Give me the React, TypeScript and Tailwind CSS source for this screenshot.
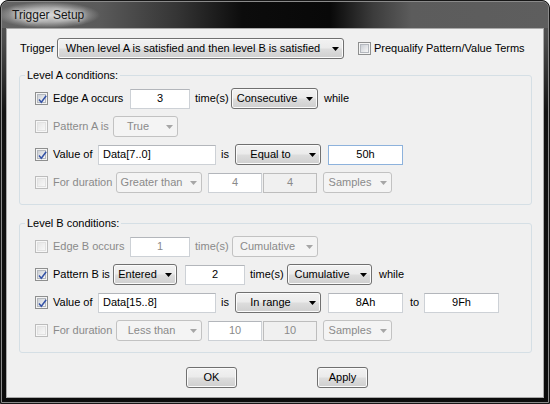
import React from 'react';

// Win7 style "Trigger Setup" dialog

const raised =
  'border-[#707070] bg-[linear-gradient(#f2f2f2_0%,#ebebeb_48%,#dddddd_52%,#cfcfcf_100%)] shadow-[inset_0_0_0_1px_#fbfbfb] text-black';
const flatOff = 'border-[#c2c2c2] bg-[#f4f4f4] text-[#8a8a8a]';

const Arrow = ({ disabled }: { disabled?: boolean }) => (
  <svg width="7" height="4" viewBox="0 0 7 4">
    <path d="M0 0h7L3.5 4z" fill={disabled ? '#a6a6a6' : '#000'} />
  </svg>
);

function Check({ checked, disabled }: { checked?: boolean; disabled?: boolean }) {
  return (
    <div
      className={`relative flex h-[13px] w-[13px] shrink-0 items-center justify-center border ${
        disabled ? 'border-[#bcbcbc] bg-[#f7f7f7]' : 'border-[#8e8f8f] bg-[#f4f4f4]'
      }`}
    >
      <div
        className={`h-[9px] w-[9px] border ${
          disabled
            ? 'border-[#e2e2e2] bg-[linear-gradient(135deg,#e6e6e6,#f7f7f7)]'
            : 'border-[#b4b8be] bg-[linear-gradient(135deg,#cbcfd5,#f7f7f7)]'
        }`}
      />
      {checked && (
        <svg className="absolute left-[1px] top-[1px]" width="11" height="11" viewBox="0 0 11 11">
          <path d="M2 5.6 L4.3 8.2 L9.2 1.7" stroke="#3452a6" strokeWidth="1.5" fill="none" />
        </svg>
      )}
    </div>
  );
}

function Combo({ text, className = '', disabled }: { text: string; className?: string; disabled?: boolean }) {
  return (
    <div className={`flex h-[21px] shrink-0 items-center rounded-[3px] border ${disabled ? flatOff : raised} ${className}`}>
      <span className="flex-1 overflow-hidden whitespace-nowrap text-center leading-none">{text}</span>
      <span className="flex w-[15px] justify-center">
        <Arrow disabled={disabled} />
      </span>
    </div>
  );
}

function Field({
  text,
  className = '',
  disabled,
  left,
  hot,
  flat,
}: {
  text: string;
  className?: string;
  disabled?: boolean;
  left?: boolean;
  hot?: boolean;
  flat?: boolean;
}) {
  return (
    <div
      className={`flex h-[20px] shrink-0 items-center border leading-none ${
        hot ? 'border-[#8db2dc]' : flat ? 'border-[#bdbdbd]' : 'border-[#cdd1d6] border-t-[#b3b6bb]'
      } ${flat ? 'bg-[#f0f0f0]' : 'bg-white'} ${disabled ? 'text-[#8a8a8a]' : 'text-black'} ${
        left ? 'justify-start pl-[4px]' : 'justify-center'
      } ${className}`}
    >
      {text}
    </div>
  );
}

function Group({ title, children, className = '' }: { title: string; children: React.ReactNode; className?: string }) {
  return (
    <div className={`relative ml-[12px] w-[513px] rounded-[3px] border border-[#d5dfe5] pb-[11px] pl-[15px] pt-[12px] ${className}`}>
      <span className="absolute left-[5px] top-[-8px] bg-[#f0f0f0] px-[2px] leading-[14px]">{title}</span>
      <div className="flex flex-col gap-[7px]">{children}</div>
    </div>
  );
}

const Row = ({ children }: { children: React.ReactNode }) => (
  <div className="flex h-[21px] items-center whitespace-nowrap">{children}</div>
);

const off = 'text-[#8a8a8a]';

export default function App() {
  return (
    <div className="h-[404px] w-[550px] bg-white font-['Liberation_Sans',Arial,sans-serif] text-[11px] text-black">
      <div className="h-full w-full rounded-t-[8px] border border-[#161616] bg-[#0e0e0e]">
        <div className="flex h-full w-full flex-col rounded-t-[7px] border border-[#8a8a8a] bg-[linear-gradient(#5b5b5b_0px,#4a4a4a_40px,#121212_110px,#0c0c0c_100%)]">
          {/* title bar */}
          <div className="flex h-[26px] shrink-0 items-center overflow-hidden rounded-t-[6px] bg-[linear-gradient(to_right,#646464_0%,#5a5a5a_18%,#353535_32%,#0c0c0c_44%,#080808_60%,#3c3c3c_68%,#5c5c5c_75%,#5e5e5e_100%)] pl-[10px]">
            <span className="-ml-[16px] bg-[radial-gradient(closest-side,rgba(235,235,235,0.85)_0%,rgba(220,220,220,0.6)_55%,rgba(200,200,200,0)_100%)] px-[16px] py-[7px] text-[12px] leading-none text-[#161616] [text-shadow:0_0_5px_rgba(255,255,255,0.9)]">
              Trigger Setup
            </span>
          </div>

          {/* client area */}
          <div className="mx-[4px] mb-[4px] flex-1 border border-[#a9a9a9] bg-[#f0f0f0]">
            <div className="mt-[9px] flex h-[21px] items-center whitespace-nowrap pl-[13px]">
              <span className="w-[37px]">Trigger</span>
              <Combo text="When level A is satisfied and then level B is satisfied" className="w-[287px]" />
              <span className="ml-[14px]">
                <Check />
              </span>
              <span className="ml-[3px]">Prequalify Pattern/Value Terms</span>
            </div>

            <Group title="Level A conditions:" className="mt-[16px]">
              <Row>
                <Check checked />
                <span className="ml-[5px] w-[77px]">Edge A occurs</span>
                <Field text="3" className="w-[60px]" />
                <span className="ml-[5px] w-[36px]">time(s)</span>
                <Combo text="Consecutive" className="w-[87px]" />
                <span className="ml-[6px]">while</span>
              </Row>
              <Row>
                <Check disabled />
                <span className={`ml-[5px] w-[60px] ${off}`}>Pattern A is</span>
                <Combo text="True" disabled className="w-[65px]" />
              </Row>
              <Row>
                <Check checked />
                <span className="ml-[5px] w-[45px]">Value of</span>
                <Field text="Data[7..0]" left className="w-[118px]" />
                <span className="ml-[5px] w-[14px]">is</span>
                <Combo text="Equal to" className="w-[86px]" />
                <Field text="50h" hot className="ml-[7px] w-[75px]" />
              </Row>
              <Row>
                <Check disabled />
                <span className={`ml-[5px] w-[63px] ${off}`}>For duration</span>
                <Combo text="Greater than" disabled className="w-[86px]" />
                <Field text="4" disabled className="ml-[6px] w-[54px]" />
                <Field text="4" disabled flat className="ml-[1px] w-[54px]" />
                <Combo text="Samples" disabled className="ml-[6px] w-[69px]" />
              </Row>
            </Group>

            <Group title="Level B conditions:" className="mt-[18px]">
              <Row>
                <Check disabled />
                <span className={`ml-[5px] w-[77px] ${off}`}>Edge B occurs</span>
                <Field text="1" disabled className="w-[60px]" />
                <span className={`ml-[5px] w-[37px] ${off}`}>time(s)</span>
                <Combo text="Cumulative" disabled className="w-[86px]" />
              </Row>
              <Row>
                <Check checked />
                <span className="ml-[5px] w-[60px]">Pattern B is</span>
                <Combo text="Entered" className="w-[64px]" />
                <Field text="2" className="ml-[8px] w-[60px]" />
                <span className="ml-[5px] w-[37px]">time(s)</span>
                <Combo text="Cumulative" className="w-[85px]" />
                <span className="ml-[7px]">while</span>
              </Row>
              <Row>
                <Check checked />
                <span className="ml-[5px] w-[45px]">Value of</span>
                <Field text="Data[15..8]" left className="w-[118px]" />
                <span className="ml-[5px] w-[14px]">is</span>
                <Combo text="In range" className="w-[86px]" />
                <Field text="8Ah" className="ml-[7px] w-[75px]" />
                <span className="ml-[7px] w-[14px]">to</span>
                <Field text="9Fh" className="w-[75px]" />
              </Row>
              <Row>
                <Check disabled />
                <span className={`ml-[5px] w-[63px] ${off}`}>For duration</span>
                <Combo text="Less than" disabled className="w-[86px]" />
                <Field text="10" disabled className="ml-[6px] w-[54px]" />
                <Field text="10" disabled flat className="ml-[1px] w-[54px]" />
                <Combo text="Samples" disabled className="ml-[6px] w-[69px]" />
              </Row>
            </Group>

            <div className="mt-[14px] flex justify-center gap-[80px] pl-[4px]">
              <button className={`h-[21px] w-[51px] rounded-[3px] border leading-none ${raised}`}>OK</button>
              <button className={`h-[21px] w-[51px] rounded-[3px] border leading-none ${raised}`}>Apply</button>
            </div>
          </div>
        </div>
      </div>
    </div>
  );
}
